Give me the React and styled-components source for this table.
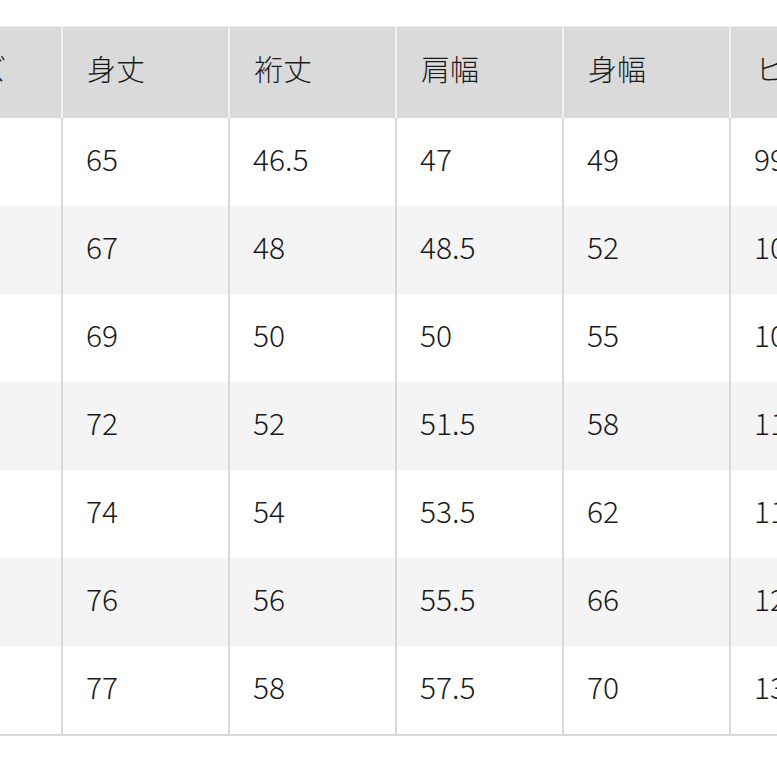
import React from "react";
import styled, { createGlobalStyle } from "styled-components";

const Global = createGlobalStyle`
  html, body { margin: 0; padding: 0; background: #ffffff; }
  body { overflow: hidden; }
`;

const Page = styled.div`
  width: 777px;
  height: 777px;
  overflow: hidden;
  padding-top: 26px;
  box-sizing: border-box;
  background: #ffffff;
`;

const Table = styled.table`
  margin-left: -104px;
  border-collapse: separate;
  border-spacing: 0;
  table-layout: fixed;
  width: ${167 * 7}px;
  font-family: "Noto Sans CJK JP", "Noto Sans", sans-serif;
  font-weight: 300;
  color: #1a1a1a;
  border-top: 1px solid #ececec;
  border-bottom: 2px solid #d9d9d9;
`;

const Col = styled.col`
  width: 167px;
`;

const HeadCell = styled.th`
  height: 91px;
  box-sizing: border-box;
  background: #dadada;
  border-right: 2px solid #f3f3f3;
  padding: 0 0 10px 24px;
  text-align: left;
  font-weight: 300;
  font-size: 29px;
  white-space: nowrap;
  overflow: hidden;
`;

const Row = styled.tr`
  background: ${(p) => (p.$shade ? "#f4f4f4" : "#ffffff")};
`;

const Cell = styled.td`
  height: 88px;
  box-sizing: border-box;
  border-right: 2px solid #d9d9d9;
  padding: 0 0 8px 23px;
  font-size: 30px;
  white-space: nowrap;
  overflow: hidden;
`;

const headers = ["サイズ", "身丈", "裄丈", "肩幅", "身幅", "ヒップ", "袖丈"];
const rows = [
  ["XS", "65", "46.5", "47", "49", "99", "58"],
  ["S", "67", "48", "48.5", "52", "104", "59"],
  ["M", "69", "50", "50", "55", "108", "60"],
  ["L", "72", "52", "51.5", "58", "113", "61"],
  ["XL", "74", "54", "53.5", "62", "118", "62"],
  ["XXL", "76", "56", "55.5", "66", "123", "63"],
  ["3XL", "77", "58", "57.5", "70", "133", "64"],
];

export default function App() {
  return (
    <>
      <Global />
      <Page>
        <Table>
          <colgroup>
            {headers.map((h) => (
              <Col key={h} />
            ))}
          </colgroup>
          <thead>
            <tr>
              {headers.map((h) => (
                <HeadCell key={h}>{h}</HeadCell>
              ))}
            </tr>
          </thead>
          <tbody>
            {rows.map((r, i) => (
              <Row key={r[0]} $shade={i % 2 === 1}>
                {r.map((v, j) => (
                  <Cell key={j}>{v}</Cell>
                ))}
              </Row>
            ))}
          </tbody>
        </Table>
      </Page>
    </>
  );
}
